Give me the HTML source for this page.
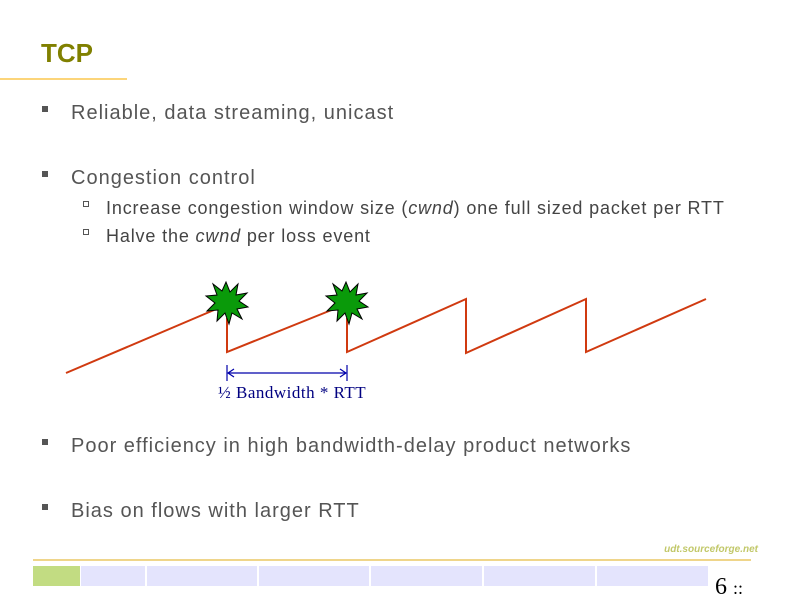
<!DOCTYPE html>
<html><head><style>
body{margin:0;width:800px;height:600px;background:#fff;position:relative;overflow:hidden;font-family:"Liberation Sans",sans-serif;}
.a{position:absolute;white-space:nowrap;}
.t{left:41px;top:38px;font-size:26px;font-weight:bold;color:#808000;letter-spacing:0px}
.l1{font-size:20px;color:#555;left:71px;letter-spacing:1px}
.b1{position:absolute;width:6px;height:6px;background:#555;left:42px}
.l2{font-size:18px;color:#444;left:106px;letter-spacing:0.85px}
.b2{position:absolute;width:4px;height:4px;border:1px solid #555;left:83px}
.box{position:absolute;top:566px;height:20px;background:#e4e4fd}
</style></head><body>
<div class="a t">TCP</div>
<div class="a" style="left:0;top:78px;width:127px;height:2px;background:#fcd57a"></div>
<div class="b1" style="top:106px"></div><div class="a l1" style="top:102px">Reliable, data streaming, unicast</div>
<div class="b1" style="top:171px"></div><div class="a l1" style="top:167px">Congestion control</div>
<div class="b2" style="top:201px"></div><div class="a l2" style="top:198px">Increase congestion window size (<i>cwnd</i>) one full sized packet per RTT</div>
<div class="b2" style="top:229px"></div><div class="a l2" style="top:226px">Halve the <i>cwnd</i> per loss event</div>
<div class="b1" style="top:439px"></div><div class="a l1" style="top:435px">Poor efficiency in high bandwidth-delay product networks</div>
<div class="b1" style="top:504px"></div><div class="a l1" style="top:500px">Bias on flows with larger RTT</div>
<svg class="a" style="left:0;top:0" width="800" height="600">
<g stroke="#d03a10" stroke-width="2" fill="none">
<polyline points="66,373 214,310"/>
<polyline points="227,318 227,352 334,309"/>
<polyline points="347,318 347,352 466,299 466,353 586,299 586,352 706,299"/>
</g>
<g fill="#0a9a0a" stroke="#000" stroke-width="1">
<polygon id="s" points="226,282 230,292 238,284 236,295 247,293 239,301 248,307 237,309 242,319 232,313 229,324 225,313 217,321 218,310 207,311 215,303 206,296 217,295 213,284 222,291"/>
<use href="#s" transform="translate(120,0)"/>
</g>
<g stroke="#00a" stroke-width="1.2" fill="none">
<line x1="227" y1="365" x2="227" y2="381"/><line x1="347" y1="365" x2="347" y2="381"/>
<line x1="228" y1="373" x2="346" y2="373"/>
<polyline points="234,369 228,373 234,377"/><polyline points="340,369 346,373 340,377"/>
</g>
<text x="218" y="398" font-family="Liberation Serif" font-size="17" letter-spacing="0.5" fill="#000080">½ Bandwidth * RTT</text>
</svg>
<div class="a" style="right:42px;top:544px;font-size:10px;font-weight:bold;font-style:italic;color:#c2c86a">udt.sourceforge.net</div>
<div class="a" style="left:33px;top:559px;width:718px;height:2px;background:#efd58a"></div>
<div class="box" style="left:33px;width:47px;background:#c2dc82"></div>
<div class="box" style="left:81px;width:64px"></div>
<div class="box" style="left:147px;width:110px"></div>
<div class="box" style="left:259px;width:110px"></div>
<div class="box" style="left:371px;width:111px"></div>
<div class="box" style="left:484px;width:111px"></div>
<div class="box" style="left:597px;width:111px"></div>
<div class="a" style="left:715px;top:574px;font-family:'Liberation Serif',serif;font-size:24px;color:#000">6 <span style="font-size:18px">::</span></div>
</body></html>
